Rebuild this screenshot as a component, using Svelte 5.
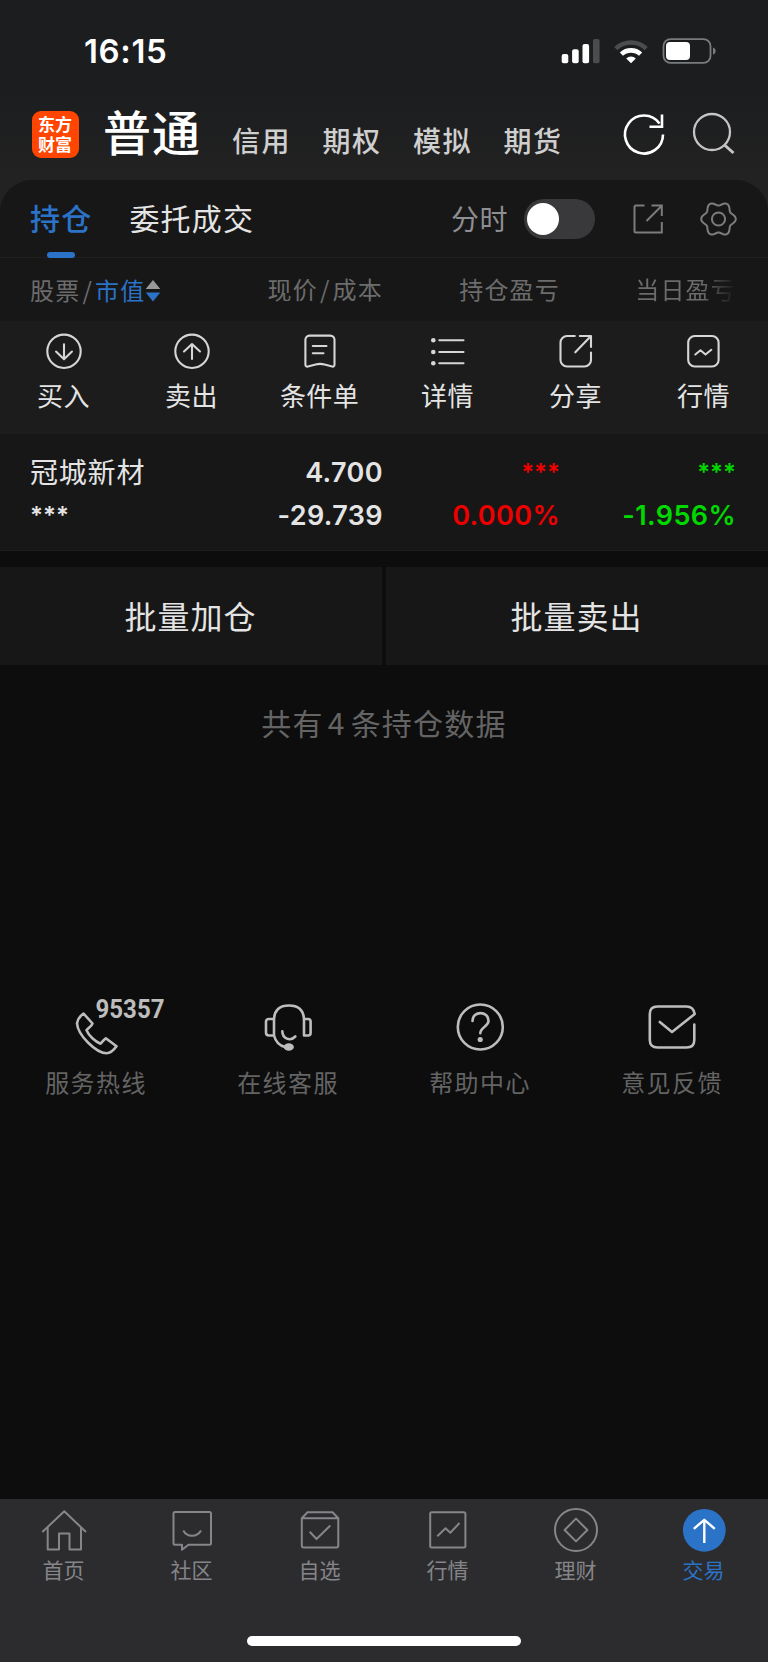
<script lang="ts">
	const accounts = ['信用', '期权', '模拟', '期货']
	const columns = ['现价/成本', '持仓盈亏', '当日盈亏']
	const actions = ['买入', '卖出', '条件单', '详情', '分享', '行情']
	const services = ['服务热线', '在线客服', '帮助中心', '意见反馈']
	const tabs = ['首页', '社区', '自选', '行情', '理财', '交易']
	const activeTab = '交易'

	let timeShare = $state(false)

	// 歯車アイコンの輪郭
	const gearPoints = Array.from({ length: 90 }, (_, i) => {
		const a = (i * 4 * Math.PI) / 180
		const r = 15.4 + 1.9 * Math.cos(6 * a)
		return `${(18 + r * Math.cos(a)).toFixed(2)},${(18 + r * Math.sin(a)).toFixed(2)}`
	}).join(' ')
</script>

<main>
	<header>
		<div class="status">
			<span class="time">16:15</span>
			<svg width="156" height="28" viewBox="0 0 156 28">
				<g fill="#fff">
					<rect x="0.7" y="17" width="6.6" height="9.3" rx="2" />
					<rect x="11.1" y="12.3" width="6.6" height="14" rx="2" />
					<rect x="21.5" y="7" width="6.6" height="19.3" rx="2" />
					<rect x="32" y="2" width="6.6" height="24.3" rx="2" fill="#4b4c4e" />
					<path d="M70 26.3 65.2 21.4a7.2 7.2 0 0 1 9.6 0z" />
					<rect x="105" y="5" width="24" height="18" rx="4" />
				</g>
				<path d="M54.8 11.6a22 22 0 0 1 30.4 0" fill="none" stroke="#4b4c4e" stroke-width="4.6" />
				<path d="M60.4 17.2a14 14 0 0 1 19.2 0" fill="none" stroke="#fff" stroke-width="4.6" />
				<rect x="102.5" y="2.1" width="47" height="23.8" rx="7" fill="none" stroke="#7a7b7d" stroke-width="1.8" />
				<path d="M152 10.5c3.6 1 3.6 6 0 7z" fill="#7a7b7d" />
			</svg>
		</div>
		<nav class="accounts">
			<div class="logo">东方财富</div>
			<h1>普通</h1>
			{#each accounts as name}
				<span class="account">{name}</span>
			{/each}
			<svg class="refresh" width="44" height="44" viewBox="0 0 44 44" fill="none" stroke="#fff" stroke-width="2.6">
				<path d="M41 22.5A19 19 0 1 1 37.5 11.5" />
				<path d="M40 2.5V14.8H27.5" />
			</svg>
			<svg width="44" height="44" viewBox="0 0 44 44" fill="none" stroke="#c4c4c4" stroke-width="2.3">
				<circle cx="20" cy="20" r="18" />
				<path d="M32.5 33 41.5 41" stroke-width="3" />
			</svg>
		</nav>
	</header>

	<section class="panel">
		<div class="views">
			<span class="view active">持仓</span>
			<span class="view">委托成交</span>
			<span class="switch-label">分时</span>
			<button class="switch" class:on={timeShare} aria-label="分时" onclick={() => (timeShare = !timeShare)}></button>
			<svg class="open" width="36" height="36" viewBox="0 0 36 36" fill="none" stroke="#7c7c7c" stroke-width="2">
				<path d="M14.5 4.6H6a1.5 1.5 0 0 0-1.5 1.5V30A1.5 1.5 0 0 0 6 31.5H31.8V21M21.5 4.6H31.8V15M16.5 20 31.5 5" />
			</svg>
			<svg width="38" height="38" viewBox="-0.5 -1 38 38" fill="none" stroke="#7c7c7c" stroke-width="2">
				<polygon points={gearPoints} />
				<circle cx="18" cy="18" r="6.6" />
			</svg>
		</div>
		<div class="grid heads">
			<div class="sort">
				股票<i>/</i><b>市值</b>
				<svg width="16" height="22" viewBox="0 0 16 22">
					<path d="M8 0 15.3 9H.7z" fill="#999" />
					<path d="M8 21.5.7 12.5h14.6z" fill="#2b73c7" />
				</svg>
			</div>
			{#each columns as col, i}
				<div class:fade={i === 2}>{#each col.split('/') as part, n}{#if n}<i>/</i>{/if}{part}{/each}</div>
			{/each}
		</div>

		<div class="actions">
			{#each actions as name, i}
				<div class="action">
					<svg width="36" height="36" viewBox="0 0 36 36" fill="none" stroke="#d6d6d6" stroke-width="2.1" stroke-linecap="round" stroke-linejoin="round">
						{#if i === 0}
							<circle cx="18" cy="17.3" r="16.7" />
							<path d="M18 10.3V25M10 17.6l8 7.6 8-7.6" />
						{:else if i === 1}
							<circle cx="18" cy="17.3" r="16.7" />
							<path d="M18 25V10.3M10 17.5l8-7.5 8 7.5" />
						{:else if i === 2}
							<path d="M7.3 1.6h21a4.2 4.2 0 0 1 4.2 4.2V30.5q0 2.5-2.4 2l-7.5-2q-4.5-1.2-9 0l-7.6 2q-2.6.5-2.6-2V5.8a4.2 4.2 0 0 1 3.9-4.2zM10.8 12H24.5M10.8 19.3H21.5" />
						{:else if i === 3}
							<path d="M9.3 6.3H33.5M9.3 18H33.5M9.3 29.3H33.5" />
							<g fill="#d6d6d6" stroke="none">
								<circle cx="3.3" cy="6.3" r="2.3" />
								<circle cx="3.3" cy="18" r="2.3" />
								<circle cx="3.3" cy="29.3" r="2.3" />
							</g>
						{:else if i === 4}
							<path d="M16.8 2H9a6.5 6.5 0 0 0-6.5 6.5V26A6.5 6.5 0 0 0 9 32.5H26.5A6.5 6.5 0 0 0 33 26V18.5M21.8 2H33V13M17.3 18.3 32.5 2.5" />
						{:else}
							<rect x="2.2" y="2" width="30.4" height="30.5" rx="6.5" />
							<path d="M9.3 20.5 14.5 16.3 19.5 20.5 25.3 15.8" />
						{/if}
					</svg>
					<span>{name}</span>
				</div>
			{/each}
		</div>

		<div class="grid stock">
			<div class="name">冠城新材</div>
			<div>4.700</div>
			<div class="stars up">***</div>
			<div class="stars down">***</div>
			<div class="stars">***</div>
			<div>-29.739</div>
			<div class="up">0.000%</div>
			<div class="down">-1.956%</div>
		</div>
	</section>

	<div class="batch">
		<button>批量加仓</button>
		<button>批量卖出</button>
	</div>
	<p class="total">共有<span>4</span>条持仓数据</p>

	<section class="services">
		{#each services as name, i}
			<div class="service">
				<svg width="60" height="60" viewBox="0 0 60 60" fill="none" stroke="#bdbdbd" stroke-width="2.6" stroke-linecap="round" stroke-linejoin="round">
					{#if i === 0}
						<path d="M17.5 16.5 26.5 26.5C25.5 29.5 22 31 20.5 33.3 23 39 29 44.5 34.5 46.7 36.5 44.5 38 42.5 39.8 41.3L50.5 49.3C47.5 53.5 44 56.3 40.5 56.3 30 56 12 38.5 11 26.5 11.5 22.5 14 19 17.5 16.5z" />
						<text x="29.5" y="20.5" textLength="69" lengthAdjust="spacingAndGlyphs">95357</text>
					{:else if i === 1}
						<path d="M16 38.5V23.5Q16 8.5 31 8.5T46 23.5V38.5H50Q52.6 38.5 52.6 36V24.5Q52.6 22 50 22H46M16 22H11Q8 22 8 24.5V35.5Q8 38.5 11 38.5H16Q18.5 48 27 50M24.3 34.3C24.5 41.5 32 45 37.3 39.5" />
						<ellipse cx="30.8" cy="50" rx="3.8" ry="2.4" fill="#bdbdbd" />
					{:else if i === 2}
						<circle cx="30.3" cy="30" r="22.5" />
						<path d="M22.5 24C22.5 13.5 38.5 13.5 38.5 24 38.5 29.5 30.3 30 30.3 36.3" />
						<circle cx="30.2" cy="42.5" r="2.6" fill="#bdbdbd" stroke="none" />
					{:else}
						<path d="M52.3 27.5V43Q52.3 50.5 44.5 50.5H15.5Q7.8 50.5 7.8 43V17Q7.8 9.5 15.5 9.5H44.5Q51.5 9.5 52.7 17L30 35 17.8 25" />
					{/if}
				</svg>
				<span>{name}</span>
			</div>
		{/each}
	</section>

	<footer>
		<nav class="tabs">
			{#each tabs as name, i}
				<div class="tab" class:active={name === activeTab}>
					<svg width="48" height="48" viewBox="0 0 48 48" fill="none" stroke="#85858a" stroke-width="2" stroke-linejoin="round">
						{#if i === 0}
							<path d="M2.3 26 24.3 5.3 46 26M7.7 21.5V43.6H19V27.5H29.5V43.6H41V21.5" />
						{:else if i === 1}
							<path d="M7 6H41.5Q43 6 43 7.5V37.3Q43 38.8 41.5 38.8H20.5L14 43.8V38.8H7Q5.5 38.8 5.5 37.3V7.5Q5.5 6 7 6zM15.3 24.5C19 31.5 29 31.5 33 24.5" />
						{:else if i === 2}
							<path d="M5.8 12.3H42.3V39.5Q42.3 41.5 40.3 41.5H7.8Q5.8 41.5 5.8 39.5V12.3L11.5 6.3H36.5L42.3 12.3M13.7 25.8 20.5 33 34.3 19.5" />
						{:else if i === 3}
							<rect x="6.2" y="6.2" width="35.2" height="35.2" rx="1.5" />
							<path d="M13.3 30.3 21.5 22.3 26.3 26.7 35.5 17" />
						{:else if i === 4}
							<circle cx="24" cy="24" r="21" />
							<path d="M24 12.6 35.4 24 24 35.4 12.6 24z" />
						{:else}
							<circle cx="24.3" cy="24.3" r="21.4" fill="#2b73c7" stroke="none" />
							<path d="M24.3 37V13.8M13.8 22.8 24.3 13.8 34.8 22.8" stroke="#fff" stroke-width="2.4" />
						{/if}
					</svg>
					<span>{name}</span>
				</div>
			{/each}
		</nav>
		<div class="home-bar"></div>
	</footer>
</main>

<style>
	:global(body) {
		background: #0d0d0d;
	}
	main {
		display: flex;
		flex-direction: column;
		width: 768px;
		height: 1663px;
		overflow: hidden;
		background: #0d0d0d;
		color: #e4e4e4;
		font-family: "Noto Sans CJK SC", sans-serif;
	}
	svg {
		display: block;
		flex: none;
		overflow: visible;
	}
	button {
		border: 0;
		color: inherit;
		font: inherit;
		letter-spacing: inherit;
	}

	/* ヘッダー */
	header {
		height: 212px;
		margin-bottom: -32px;
		background: linear-gradient(#1c1d1f 90px, #222 180px);
	}
	.status {
		display: flex;
		justify-content: space-between;
		align-items: center;
		box-sizing: border-box;
		height: 96px;
		padding: 6px 51px 0 84px;
	}
	.time {
		color: #fff;
		font: 600 33px/40px Inter, sans-serif;
		letter-spacing: 0.6px;
	}
	.accounts {
		display: flex;
		align-items: center;
		height: 76px;
		padding-left: 32px;
	}
	.logo {
		box-sizing: border-box;
		width: 47px;
		height: 47px;
		padding: 3px 6px 0;
		border-radius: 9px;
		background: #ff4500;
		color: #fff;
		font-size: 17px;
		font-weight: 700;
		line-height: 20px;
	}
	h1 {
		margin: -9px 9px 0 24px;
		color: #fff;
		font-size: 48px;
		font-weight: 500;
		line-height: 60px;
		letter-spacing: 1px;
	}
	.account {
		width: 68.5px;
		margin: 11px 0 0 22px;
		color: #cfcfcf;
		font-size: 28px;
		font-weight: 500;
		line-height: 36px;
		letter-spacing: 1.6px;
	}
	.refresh {
		margin: 0 26px 0 50px;
	}

	/* 保有銘柄パネル */
	.panel {
		border-bottom: 1px solid #1d1d1d;
		border-radius: 32px 32px 0 0;
		background: #171717;
	}
	.views {
		display: flex;
		align-items: center;
		height: 77px;
		padding-left: 30px;
		border-bottom: 1px solid #1f1f1f;
		font-size: 30px;
		letter-spacing: 1.2px;
	}
	.view {
		position: relative;
		margin: -3px 37px 0 0;
	}
	.view.active {
		color: #2b73c7;
		font-weight: 500;
	}
	.view.active::after {
		content: "";
		position: absolute;
		left: 17px;
		bottom: -19px;
		width: 28px;
		height: 6px;
		border-radius: 3px;
		background: #2b73c7;
	}
	.switch-label {
		margin: -1px 16px 0 auto;
		color: #8e8e93;
		font-size: 28px;
		letter-spacing: 0.5px;
	}
	.switch {
		width: 71px;
		height: 40px;
		padding: 4px 4px 4px 3px;
		border-radius: 20px;
		background: #39393b;
	}
	.switch::before {
		content: "";
		display: block;
		width: 32px;
		height: 32px;
		border-radius: 50%;
		background: #fff;
	}
	.switch.on::before {
		margin-left: auto;
	}
	.open {
		margin: 0 34px 0 35px;
	}
	.views svg:last-child {
		margin-right: 30px;
	}
	.grid {
		display: grid;
		grid-template-columns: 177px 176px 177px 176px;
		align-items: center;
		padding-left: 30px;
		text-align: right;
	}
	.heads {
		height: 63px;
		color: #6c6c6c;
		font-size: 24px;
		line-height: 62px;
		letter-spacing: 1.2px;
	}
	.heads div {
		height: 63px;
	}
	.heads i {
		padding: 0 2px;
		font-style: normal;
	}
	.heads b {
		color: #2b73c7;
		font-weight: 400;
	}
	.sort {
		display: flex;
		align-items: center;
	}
	.sort svg {
		margin-top: 2px;
	}
	.fade {
		background: linear-gradient(90deg, #6c6c6c 80%, #171717);
		background-clip: text;
		-webkit-background-clip: text;
		color: transparent;
	}

	.actions {
		display: flex;
		height: 113px;
		background: #1c1c1c;
	}
	.action {
		display: flex;
		flex: 1;
		flex-direction: column;
		align-items: center;
		padding-top: 13px;
		font-size: 26px;
		line-height: 36px;
	}
	.action span {
		margin: 7px 1px 0 0;
		letter-spacing: 0.4px;
	}

	.stock {
		grid-template-rows: 43px 43px;
		height: 99px;
		padding-top: 17px;
		font: 600 27px/43px Inter, sans-serif;
		letter-spacing: 0.4px;
	}
	.stock .name {
		padding-bottom: 3px;
		font: 400 28px/40px "Noto Sans CJK SC", sans-serif;
		letter-spacing: 0.8px;
		text-align: left;
	}
	.stars {
		font-size: 24px;
		letter-spacing: 0;
	}
	.stars:nth-child(5) {
		text-align: left;
	}
	.up {
		color: #ee0000;
	}
	.down {
		color: #00d800;
	}

	/* 一括操作ボタン */
	.batch {
		display: flex;
		gap: 4px;
		height: 98px;
		margin-top: 16px;
		font-size: 32px;
		letter-spacing: 1px;
	}
	.batch button {
		flex: 1;
		padding: 0 1px 3px 0;
		background: #171717;
	}
	.total {
		margin: 35px 0 0;
		color: #646464;
		font-size: 30px;
		line-height: 44px;
		letter-spacing: 1.2px;
		text-align: center;
	}
	.total span {
		margin: 0 5px 0 4px;
	}

	/* サポート */
	.services {
		display: flex;
		margin-top: 253px;
	}
	.service {
		display: flex;
		flex: 1;
		flex-direction: column;
		align-items: center;
		color: #646464;
		font-size: 24px;
		line-height: 36px;
		letter-spacing: 1.4px;
	}
	.service span {
		margin-top: 7px;
	}
	.service text {
		fill: #bdbdbd;
		stroke: none;
		font: 700 25px Roboto, sans-serif;
		letter-spacing: 0;
	}

	/* 下部タブ */
	footer {
		display: flex;
		flex-direction: column;
		align-items: center;
		box-sizing: border-box;
		height: 164px;
		margin-top: auto;
		border-bottom: 1px solid #fff;
		background: #2c2c2e;
	}
	.tabs {
		display: flex;
		align-self: stretch;
	}
	.tab {
		display: flex;
		flex: 1;
		flex-direction: column;
		align-items: center;
		padding-top: 7px;
		color: #85858a;
		font-size: 21px;
		line-height: 30px;
	}
	.tab span {
		margin-right: 1px;
	}
	.tab.active {
		color: #2b73c7;
	}
	.home-bar {
		width: 274px;
		height: 10px;
		margin-top: 52px;
		border-radius: 5px;
		background: #fff;
	}
</style>
